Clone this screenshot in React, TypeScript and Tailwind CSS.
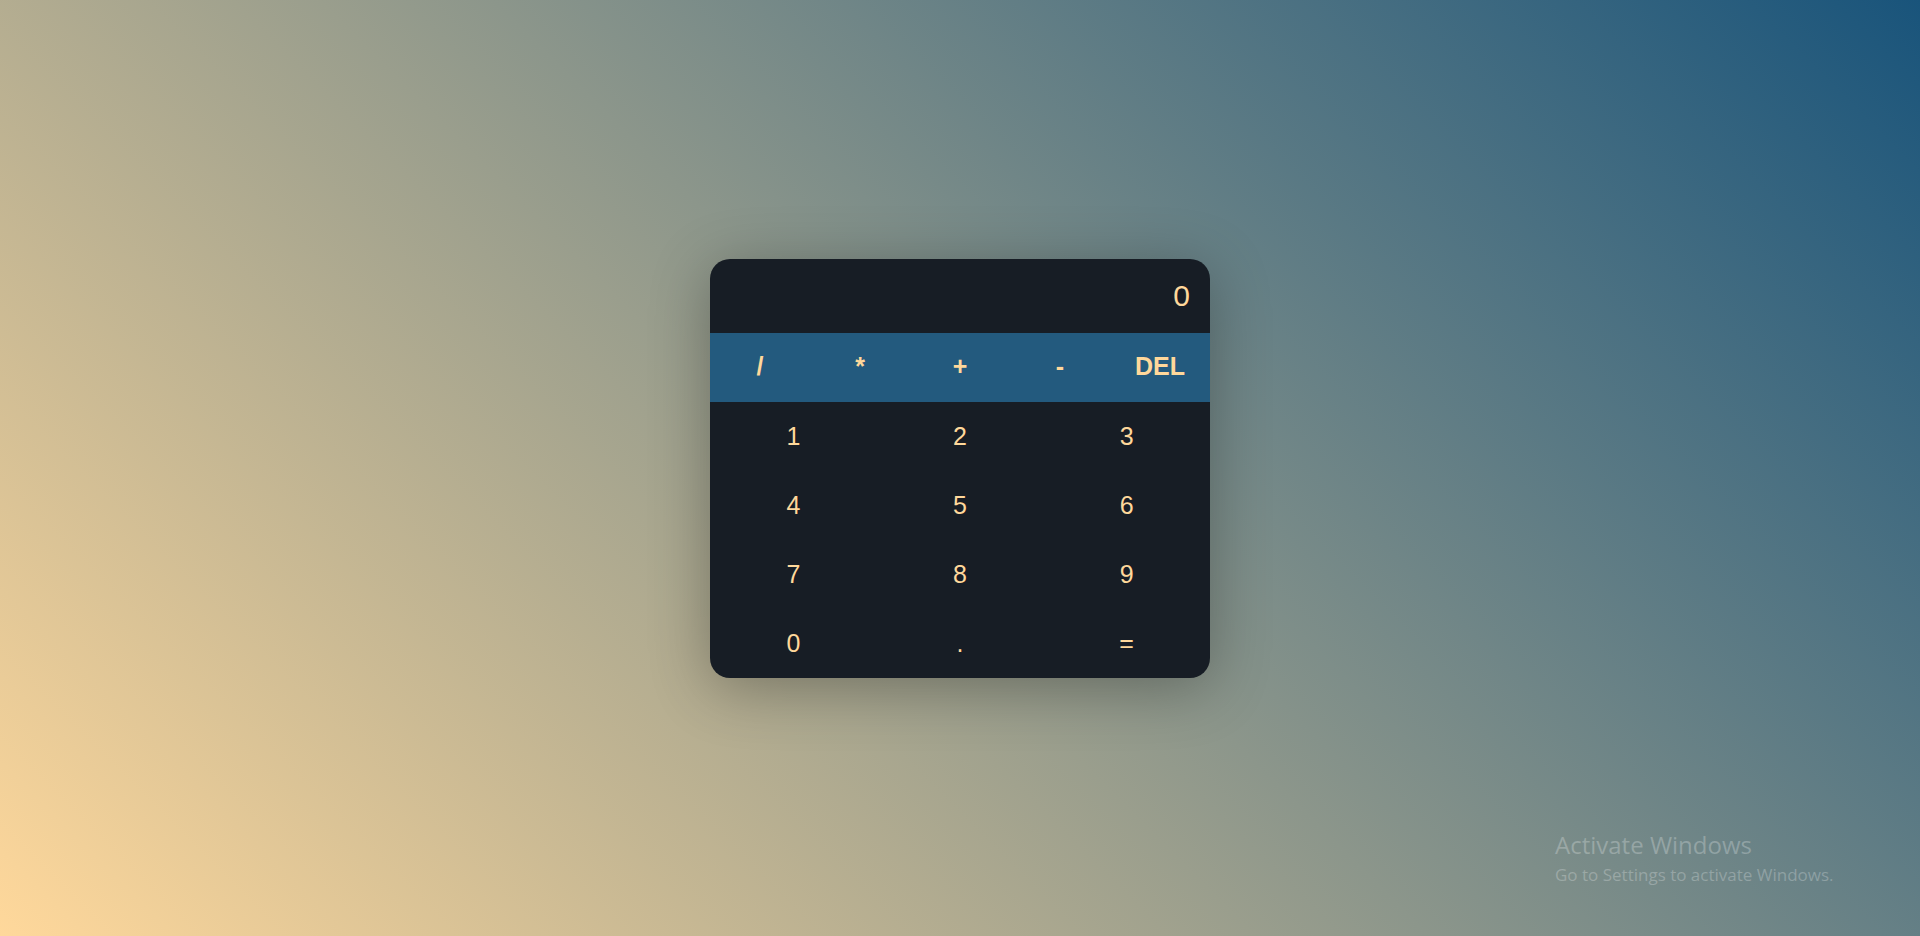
const ops = ["/", "*", "+", "-", "DEL"];
const keys = ["1", "2", "3", "4", "5", "6", "7", "8", "9", "0", ".", "="];

export default function App() {
  return (
    <div className="relative min-h-screen w-full flex items-center justify-center bg-[linear-gradient(45deg,#ffd89b,#19547b)] font-['Liberation_Sans',Arial,sans-serif]">
      <div className="w-[500px] rounded-[20px] overflow-hidden bg-[#171d25] shadow-[0_10px_60px_rgba(0,0,0,0.3)]">
        <div className="h-[74px] flex items-center justify-end px-5 text-[30px] text-[#ffd89b]">0</div>
        <div className="grid grid-cols-5 h-[69px] bg-[#235a7e]">
          {ops.map((op) => (
            <button key={op} className="flex items-center justify-center text-[25px] font-bold text-[#ffd89b]">
              {op}
            </button>
          ))}
        </div>
        <div className="grid grid-cols-3">
          {keys.map((k) => (
            <button key={k} className="h-[69px] flex items-center justify-center pt-[2px] text-[25px] text-[#ffd89b]">
              {k}
            </button>
          ))}
        </div>
      </div>

      <div className="absolute left-[1555px] top-[830px] text-white/25 font-['Open_Sans',sans-serif] leading-tight">
        <div className="text-[24px]">Activate Windows</div>
        <div className="text-[17px] mt-[4px]">Go to Settings to activate Windows.</div>
      </div>
    </div>
  );
}
